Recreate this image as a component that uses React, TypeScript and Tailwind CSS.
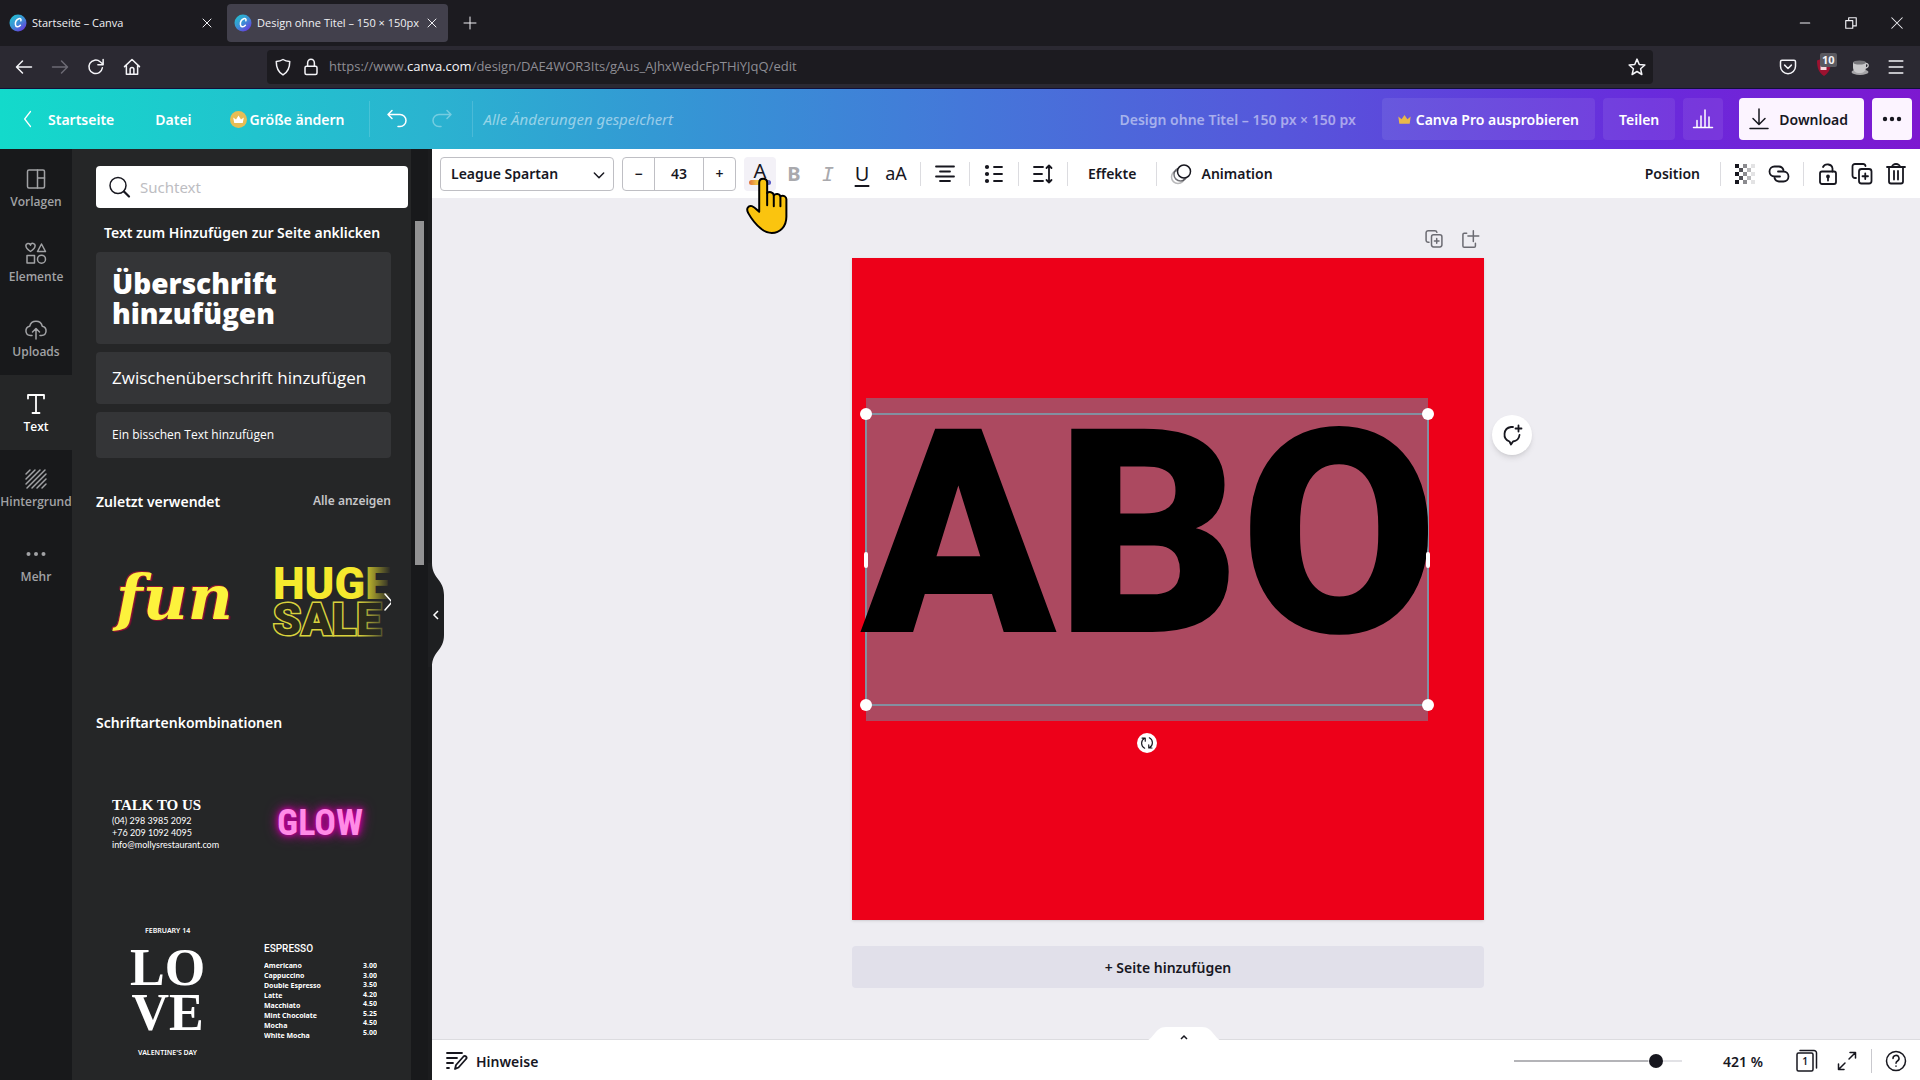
import { useState } from 'react';
import type { ReactNode } from 'react';

type IconProps = {
  size?: number;
  stroke?: number;
  className?: string;
  children: ReactNode;
};

function Icon({ size = 24, stroke = 1.5, className = '', children }: IconProps) {
  return (
    <svg
      width={size}
      height={size}
      viewBox="0 0 24 24"
      fill="none"
      stroke="currentColor"
      strokeWidth={stroke}
      strokeLinecap="round"
      strokeLinejoin="round"
      className={`shrink-0 ${className}`}
      aria-hidden="true"
    >
      {children}
    </svg>
  );
}

function CanvaLogo() {
  return (
    <svg width="18" height="18" viewBox="0 0 18 18" className="shrink-0" aria-hidden="true">
      <defs>
        <linearGradient id="logo" x1="0" y1="0" x2="0.8" y2="1">
          <stop offset="0" stopColor="#1fc8cf" />
          <stop offset="0.55" stopColor="#3d8fd6" />
          <stop offset="1" stopColor="#6a33dc" />
        </linearGradient>
      </defs>
      <circle cx="9" cy="9" r="8.5" fill="url(#logo)" />
      <path d="M11.8 6.8c.8-1.6-.4-2.7-2-2.1-2.3.9-3.6 3.4-3.4 5.8.2 2.6 2.9 3.3 5 .8" fill="none" stroke="#fff" strokeWidth="1.5" strokeLinecap="round" />
    </svg>
  );
}

const crownPath = 'M4 18h16l1.500-11-5 4L12 4.500 7.500 11l-5-4z';

function DuplicateIcon({ size = 24 }: { size?: number }) {
  return (
    <Icon size={size} stroke={1.8}>
      <path d="M6 16H5a2.500 2.500 0 0 1-2.500-2.500v-9A2.500 2.500 0 0 1 5 2h8a2.500 2.500 0 0 1 2.500 2" />
      <rect x="9" y="7" width="12.5" height="14.5" rx="2.5" />
      <path d="M15.250 11.500v5.500M12.500 14.250H18" />
    </Icon>
  );
}

function TabBar() {
  return (
    <div className="flex h-[46px] items-center bg-[#1c1b20] font-['Open_Sans',sans-serif] text-[11px] text-[#f0f0f4]">
      <a href="#start" className="flex w-[227px] items-center pr-[14px] pl-[9px]">
        <CanvaLogo />
        <span className="ml-[5px] flex-1">Startseite – Canva</span>
        <Icon size={12} stroke={2}><path d="M4 4l16 16M20 4L4 20" /></Icon>
      </a>
      <a href="#design" className="flex h-[38px] w-[221px] items-center rounded bg-[#42404c] pr-[10px] pl-[7px]">
        <CanvaLogo />
        <span className="ml-[5px] flex-1 whitespace-nowrap">Design ohne Titel – 150 × 150px</span>
        <Icon size={12} stroke={2}><path d="M4 4l16 16M20 4L4 20" /></Icon>
      </a>
      <button aria-label="Neuer Tab" className="ml-[14px]">
        <Icon size={16}><path d="M12 3v18M3 12h18" /></Icon>
      </button>
      <div className="ml-auto flex items-center gap-8 pr-4">
        <button aria-label="Minimieren"><Icon size={14} stroke={2}><path d="M4 12h16" /></Icon></button>
        <button aria-label="Verkleinern">
          <Icon size={14} stroke={2}><path d="M3 8h12v13H3zM8 8V3h13v14h-6" /></Icon>
        </button>
        <button aria-label="Schließen"><Icon size={14} stroke={1.8}><path d="M3 3l18 18M21 3L3 21" /></Icon></button>
      </div>
    </div>
  );
}

function AddressBar() {
  return (
    <div className="flex h-[43px] items-center border-b border-[#12103a] bg-[#2b2932] text-[#f4f4f8]">
      <div className="flex w-[267px] items-center gap-[18px] pl-[15px]">
        <button aria-label="Zurück"><Icon size={18} stroke={2}><path d="M22 12H3M10 4l-8 8 8 8" /></Icon></button>
        <button aria-label="Vor" className="text-[#6c6a74]"><Icon size={18} stroke={2}><path d="M2 12h19M14 4l8 8-8 8" /></Icon></button>
        <button aria-label="Neu laden">
          <Icon size={18} stroke={2}><path d="M20.500 13a9 9 0 1 1-3-8l3.500 3M21.500 2v7h-7" /></Icon>
        </button>
        <button aria-label="Startseite">
          <Icon size={18} stroke={2}><path d="M2 11.500L12 2l10 9.500M4.500 10v11.500h15V10M9.500 21v-6a2.500 2.500 0 0 1 5 0v6" /></Icon>
        </button>
      </div>
      <div className="flex h-[34px] flex-1 items-center rounded bg-[#1c1b20] px-[7px] font-['Open_Sans',sans-serif] text-[13px]">
        <Icon size={18} stroke={2}><path d="M12 2c3 2 6 2.500 9 2.500C21 13 18 19 12 22.500 6 19 3 13 3 4.500c3 0 6-.5 9-2.500z" /></Icon>
        <Icon size={18} stroke={2} className="ml-[10px]">
          <rect x="4" y="11" width="16" height="11" rx="2" />
          <path d="M7.500 11V6.500a4.500 5 0 0 1 9 0V11" />
        </Icon>
        <span className="ml-[9px] flex-1 text-[#8e8d94]">
          https://www.<span className="text-[#f4f4f8]">canva.com</span>/design/DAE4WOR3Its/gAus_AJhxWedcFpTHiYJqQ/edit
        </span>
        <button aria-label="Lesezeichen">
          <Icon size={18} stroke={2}><path d="M12 1.500l3 7.200 7.500.7-5.700 5 1.700 7.600L12 18l-6.500 4 1.700-7.600-5.700-5 7.500-.7z" /></Icon>
        </button>
      </div>
      <div className="flex w-[267px] items-center justify-end gap-[18px] pr-[15px]">
        <button aria-label="Pocket">
          <Icon size={18} stroke={2}><path d="M4 3h16a2 2 0 0 1 2 2v6a10 10 0 0 1-20 0V5a2 2 0 0 1 2-2zM7.500 9.500l4.500 4.500 4.500-4.500" /></Icon>
        </button>
        <button aria-label="Werbeblocker" className="relative">
          <svg width="18" height="18" viewBox="0 0 18 18" aria-hidden="true">
            <path d="M9 0l7 2.500C16 10 14 15 9 18 4 15 2 10 2 2.500z" fill="#9c1230" />
            <path d="M5.500 7h6v5h-6z" fill="#f7d9de" />
          </svg>
          <span className="absolute -top-[5px] left-[5px] rounded-xs bg-[#5a5960] px-[2px] text-[11px] leading-[14px] font-bold">10</span>
        </button>
        <button aria-label="Erweiterung">
          <svg width="18" height="18" viewBox="0 0 18 18" aria-hidden="true">
            <ellipse cx="9" cy="14" rx="8.5" ry="3" fill="#a5a4a8" />
            <path d="M2 4h13v5c0 4-2.500 6-6.500 6S2 13 2 9z" fill="#c9c8cb" />
            <ellipse cx="8.5" cy="4.5" rx="6.5" ry="2" fill="#77767b" />
            <path d="M15 5.500c3 0 3 4-.5 4.500" fill="none" stroke="#c9c8cb" strokeWidth="1.3" />
          </svg>
        </button>
        <button aria-label="Menü"><Icon size={18} stroke={2.2}><path d="M3 4h18M3 12h18M3 20h18" /></Icon></button>
      </div>
    </div>
  );
}

function Header() {
  return (
    <header className="flex h-[60px] items-center bg-[linear-gradient(90deg,#13dacb_0%,#2ab4d0_22%,#3399d4_34%,#4478d9_50%,#5558db_66%,#692bdc_86%,#7d18d0_100%)] text-[14px] font-semibold text-white">
      <a href="#home" className="flex items-center pl-[18px]">
        <Icon size={20}><path d="M15 3l-7 9 7 9" /></Icon>
        <span className="ml-[10px]">Startseite</span>
      </a>
      <button className="ml-[41px]">Datei</button>
      <button className="ml-[38px] flex items-center gap-[3px]">
        <svg width="17" height="17" viewBox="0 0 24 24" aria-hidden="true">
          <circle cx="12" cy="12" r="12" fill="#e6bd55" />
          <path d="M6 17h12l1.500-8-4 3L12 6.500 8.500 12l-4-3z" fill="#fff" />
        </svg>
        Größe ändern
      </button>
      <span className="ml-6 h-9 w-px bg-white/15" />
      <button aria-label="Rückgängig" className="ml-[15px]">
        <Icon><path d="M7 3.500L3 7.500l4 4M3 7.500h12a6 6 0 0 1 0 12h-2" /></Icon>
      </button>
      <button aria-label="Wiederholen" className="ml-[21px] text-white/35">
        <Icon><path d="M17 3.500l4 4-4 4M21 7.500H9a6 6 0 0 0 0 12h2" /></Icon>
      </button>
      <span className="ml-[18px] h-9 w-px bg-white/15" />
      <span className="ml-[11px] text-[15px] font-normal text-white/50 italic">Alle Änderungen gespeichert</span>
      <div className="ml-auto flex items-center gap-2 pr-2">
        <span className="mr-[18px] text-white/50">Design ohne Titel – 150 px × 150 px</span>
        <button className="flex h-[42px] items-center gap-[5px] rounded bg-white/8 px-4">
          <svg width="13" height="13" viewBox="2 4 20 15" aria-hidden="true"><path d={crownPath} fill="#eab94a" /></svg>
          Canva Pro ausprobieren
        </button>
        <button className="h-[42px] rounded bg-white/8 px-4">Teilen</button>
        <button aria-label="Statistik" className="flex h-[42px] w-10 items-center justify-center rounded bg-white/8">
          <Icon><path d="M2.500 20.500h19M6 20.500v-7M10 20.500V9M14 20.500V3M18 20.500V10" /></Icon>
        </button>
        <button className="ml-2 flex h-[42px] items-center gap-2 rounded bg-[#fcf4ff] pr-4 pl-2 text-[#17171f]">
          <Icon><path d="M12 2v15M6 11.500l6 6 6-6M3 21.500h18" /></Icon>
          Download
        </button>
        <button aria-label="Mehr" className="flex h-[42px] w-10 items-center justify-center rounded bg-[#fcf4ff] text-[#17171f]">
          <svg width="20" height="6" viewBox="0 0 20 6" fill="currentColor" aria-hidden="true">
            <circle cx="3" cy="3" r="2.2" /><circle cx="10" cy="3" r="2.2" /><circle cx="17" cy="3" r="2.2" />
          </svg>
        </button>
      </div>
    </header>
  );
}

const railItems = [
  {
    label: 'Vorlagen',
    icon: <Icon><rect x="3.5" y="3" width="17" height="18" rx="1.5" /><path d="M13.500 3v18M13.500 11h7" /></Icon>,
  },
  {
    label: 'Elemente',
    icon: (
      <Icon>
        <path d="M6.500 9.500C3 7 2 5.500 2 4.200A2.300 2.300 0 0 1 6.500 3.200a2.300 2.300 0 0 1 4.500 1c0 1.300-1 2.800-4.500 5.300zM17.500 2l4 7.500h-8zM3 13.500h7.500V21H3z" />
        <circle cx="17.5" cy="17.2" r="4" />
      </Icon>
    ),
  },
  {
    label: 'Uploads',
    icon: <Icon><path d="M8 18.500H6.500a4.700 4.700 0 0 1-.8-9.300 6.500 6.500 0 0 1 12.600 0 4.700 4.700 0 0 1-.8 9.300H16M12 22V12M8.500 15L12 11.500l3.500 3.500" /></Icon>,
  },
  {
    label: 'Text',
    icon: <Icon stroke={1.8}><path d="M4 6.500V3h16v3.500M12 3v18M8.500 21h7" /></Icon>,
  },
  {
    label: 'Hintergrund',
    icon: <Icon><path d="M2 7l4-4M2 12l9-9M2 17L16 3M3 21L21 3M8 21L22 7M13 21l9-9M18 21l4-4" /></Icon>,
  },
  {
    label: 'Mehr',
    icon: <Icon><g fill="currentColor" stroke="none"><circle cx="4.5" cy="12" r="2" /><circle cx="12" cy="12" r="2" /><circle cx="19.5" cy="12" r="2" /></g></Icon>,
  },
];

function Rail({ active, onSelect }: { active: string; onSelect: (label: string) => void }) {
  return (
    <nav className="flex w-[72px] shrink-0 flex-col bg-[#18191b] pt-px">
      {railItems.map((item) => (
        <button
          key={item.label}
          onClick={() => onSelect(item.label)}
          className={`flex h-[75px] flex-col items-center pt-[17px] font-['Open_Sans',sans-serif] text-[12px] leading-[22px] font-semibold ${
            item.label === active ? 'bg-[#252627] text-white' : 'text-[#a1a2a5]'
          }`}
        >
          {item.icon}
          {item.label}
        </button>
      ))}
    </nav>
  );
}

const drinks = ['Americano', 'Cappuccino', 'Double Espresso', 'Latte', 'Macchiato', 'Mint Chocolate', 'Mocha', 'White Mocha'];
const prices = ['3.00', '3.00', '3.50', '4.20', '4.50', '5.25', '4.50', '5.00'];

function TextPanel() {
  return (
    <aside className="relative flex w-[360px] shrink-0 border-r-4 border-[#1b1c1e] bg-[#252627] text-white">
      <div className="min-w-0 flex-1 overflow-hidden pt-[17px] pl-6">
        <label className="flex h-[42px] w-[312px] items-center gap-[9px] rounded bg-white pl-[11px] text-[#17171f]">
          <Icon><circle cx="11" cy="10.5" r="8" /><path d="M17 16.500l5 5" strokeWidth="2.2" /></Icon>
          <input aria-label="Suche" placeholder="Suchtext" className="min-w-0 flex-1 text-[15px] outline-none placeholder:text-[#bdbdc2]" />
        </label>
        <div className="w-[295px]">
          <p className="mt-[13px] pl-2 text-[14px] leading-6 font-semibold">Text zum Hinzufügen zur Seite anklicken</p>
          <div className="mt-[7px] flex flex-col gap-2 font-['Open_Sans',sans-serif]">
            <button className="h-[92px] rounded bg-[#343537] px-4 text-left text-[28px] leading-[30px] font-extrabold">
              Überschrift<br />hinzufügen
            </button>
            <button className="h-[52px] rounded bg-[#343537] px-4 text-left text-[17px] whitespace-nowrap">Zwischenüberschrift hinzufügen</button>
            <button className="h-[46px] rounded bg-[#343537] px-4 text-left text-[12px]">Ein bisschen Text hinzufügen</button>
          </div>

          <div className="mt-[31px] flex h-6 items-center justify-between">
            <h2 className="text-[14px] font-semibold">Zuletzt verwendet</h2>
            <a href="#alle" className="text-[12px] font-semibold text-[#c5c5c8]">Alle anzeigen</a>
          </div>
          <div className="relative mt-[35px] flex h-[108px] items-center justify-between overflow-hidden">
            <span className="pb-2 pl-5 font-['DejaVu_Serif',serif] text-[62px] leading-[64px] font-bold text-[#fdf23c] italic [text-shadow:1px_1px_0_#8c1832,-1px_-1px_0_#8c1832,2px_1px_0_#5c1230]">fun</span>
            <span className="w-[118px] shrink-0 font-['Roboto',sans-serif] text-[45px] leading-[36px] font-black text-[#f5e92d]">
              <span className="block">HUGE</span>
              <span className="block text-[#2b2a1a] [paint-order:stroke_fill] [-webkit-text-stroke:3px_#d9d23c]">SALE</span>
            </span>
            <span className="absolute inset-y-0 right-0 w-8 bg-linear-to-r from-transparent to-[#252627]" />
            <button aria-label="Weiter" className="absolute -right-[9px]"><Icon><path d="M9 4l7 8-7 8" /></Icon></button>
          </div>

          <h2 className="mt-[55px] text-[14px] leading-6 font-semibold">Schriftartenkombinationen</h2>
          <div className="mt-[46px] flex h-[84px] items-center justify-between pr-7 pl-4">
            <div className="font-['Lato',sans-serif] text-[9px] leading-3">
              <p className="font-['Liberation_Serif',serif] text-[15px] leading-5 font-bold">TALK TO US</p>
              <p>(04) 298 3985 2092</p>
              <p>+76 209 1092 4095</p>
              <p>info@mollysrestaurant.com</p>
            </div>
            <span className="font-['Liberation_Sans_Narrow','Roboto_Condensed','Roboto',sans-serif] text-[36px] font-bold text-[#ff8be6] [text-shadow:0_0_4px_#c0009b,0_0_8px_#c0009b,0_0_14px_#a8008a]">GLOW</span>
          </div>
          <div className="mt-[60px] flex justify-between pr-[14px] pl-[34px]">
            <div className="flex flex-col items-center text-[7px] leading-3 font-semibold">
              <p>FEBRUARY 14</p>
              <p className="mt-2 text-center font-['Liberation_Serif',serif] text-[52px] leading-[45px] font-bold">LO<br />VE</p>
              <p className="mt-3">VALENTINE'S DAY</p>
            </div>
            <div className="w-[113px] pt-4 text-[7px] font-bold">
              <p className="font-['Roboto',sans-serif] text-[10px] leading-4 font-medium">ESPRESSO</p>
              <div className="mt-1 flex h-[77px] justify-between overflow-hidden">
                <div className="leading-[10px]">{drinks.map((name) => <p key={name}>{name}</p>)}</div>
                <div className="flex h-[76px] flex-col justify-between text-right leading-[9px]">
                  {prices.map((price, i) => <p key={i}>{price}</p>)}
                </div>
              </div>
            </div>
          </div>
        </div>
      </div>
      <div className="w-[17px] shrink-0 bg-[#18191b] pt-[72px]">
        <div className="mx-1 h-[344px] bg-[#929293]" />
      </div>
      <button aria-label="Leiste einklappen" className="absolute top-[414px] -right-4 z-10 text-white">
        <svg width="16" height="104" viewBox="0 0 16 104" aria-hidden="true">
          <path d="M0 0h4c0 16 12 16 12 32v40c0 16-12 16-12 32H0z" fill="#1e1f21" />
          <path d="M10 48l-4 4 4 4" fill="none" stroke="currentColor" strokeWidth="1.5" />
        </svg>
      </button>
    </aside>
  );
}

function Divider() {
  return <span className="h-6 w-px bg-[#dcdce0]" />;
}

function Toolbar() {
  const [size, setSize] = useState(43);

  return (
    <div className="relative z-10 flex h-[49px] shrink-0 items-center bg-white px-2 text-[14px] font-semibold text-[#17171f]">
      <div className="relative">
        <select aria-label="Schriftart" className="h-[34px] w-[174px] appearance-none rounded border border-[#bfbfc4] pl-[10px]">
          <option>League Spartan</option>
        </select>
        <Icon size={16} stroke={2.2} className="pointer-events-none absolute top-[10px] right-[7px]"><path d="M5 9l7 7 7-7" /></Icon>
      </div>
      <div className="ml-2 flex h-[34px] rounded border border-[#bfbfc4]">
        <button aria-label="Kleiner" onClick={() => setSize(size - 1)} className="w-[31px]">−</button>
        <input
          aria-label="Schriftgröße"
          value={size}
          onChange={(e) => setSize(Number(e.target.value) || 0)}
          className="w-[50px] border-x border-[#bfbfc4] text-center outline-none"
        />
        <button aria-label="Größer" onClick={() => setSize(size + 1)} className="w-[31px]">+</button>
      </div>
      <button aria-label="Textfarbe" className="relative ml-2 flex h-[34px] w-8 flex-col items-center rounded bg-[#f3f1f7] pt-[5px]">
        <span className="text-[20px] leading-[18px] font-normal">A</span>
        <span className="h-[5px] w-[22px] rounded-full bg-linear-to-r from-[#e0703c] via-[#f5e04a] to-[#4b49c8]" />
        <svg width="47" height="58" viewBox="940 95 140 175" className="pointer-events-none absolute top-5 -left-px" aria-hidden="true">
          <path
            d="M988 200V112C988 96 1012 96 1012 112V143C1018 138 1030 140 1032 150C1038 143 1050 146 1052 153C1062 148 1070 155 1070 162V215C1070 245 1050 264 1026 264C1010 264 1000 257 992 250C978 238 965 222 955 204C947 190 956 180 966 183C975 186 980 193 988 200Z"
            fill="#fac40f"
            stroke="#000"
            strokeWidth="6"
            strokeLinejoin="round"
          />
          <path d="M1012 143V180M1032 150V183M1052 153V183" stroke="#000" strokeWidth="6" strokeLinecap="round" />
        </svg>
      </button>
      <div className="ml-[6px] flex h-6 items-center gap-[10px]">
        <button aria-label="Fett" className="w-6 text-[20px] font-bold text-[#a9a9ad]">B</button>
        <button aria-label="Kursiv" className="w-6 font-['DejaVu_Sans_Mono',monospace] text-[20px] font-normal text-[#a9a9ad] italic">I</button>
        <button aria-label="Unterstrichen" className="w-6 text-[20px] font-normal underline underline-offset-4">U</button>
        <button aria-label="Großbuchstaben" className="w-6 text-[18px] font-normal">aA</button>
      </div>
      <div className="ml-3 flex items-center gap-3">
        <Divider />
        <button aria-label="Ausrichtung"><Icon stroke={1.8}><path d="M3 4.500h18M7 9.500h10M3 14.500h18M7 19h10" /></Icon></button>
        <Divider />
        <button aria-label="Liste">
          <Icon stroke={1.8}>
            <path d="M12 5h8M12 12h8M12 19h8" />
            <g fill="currentColor"><circle cx="5" cy="5" r="1.2" /><circle cx="5" cy="12" r="1.2" /><circle cx="5" cy="19" r="1.2" /></g>
          </Icon>
        </button>
        <Divider />
        <button aria-label="Abstand"><Icon stroke={1.8}><path d="M3 5h9M3 12h8M3 19h9M18 3.500v17M15.500 6L18 3.500 20.500 6M15.500 18l2.500 2.500 2.500-2.500" /></Icon></button>
        <Divider />
      </div>
      <button className="mx-5">Effekte</button>
      <Divider />
      <button className="ml-3 flex items-center gap-2">
        <Icon>
          <circle cx="9" cy="15" r="6.5" opacity="0.3" />
          <circle cx="11.5" cy="12.5" r="6.5" opacity="0.6" />
          <circle cx="15" cy="9.5" r="6.5" fill="#fff" />
        </Icon>
        Animation
      </button>
      <button className="mr-5 ml-auto">Position</button>
      <Divider />
      <div className="mx-3 flex gap-[10px]">
        <button aria-label="Transparenz">
          <svg width="24" height="24" viewBox="0 0 24 24" fill="#17171f" aria-hidden="true">
            <path d="M2 2h4v4H2zM2 10h4v4H2zM2 18h4v4H2z" />
            <path d="M6 6h4v4H6zM6 14h4v4H6z" opacity="0.75" />
            <path d="M10 2h4v4h-4zM10 10h4v4h-4zM10 18h4v4h-4z" opacity="0.5" />
            <path d="M14 6h4v4h-4zM14 14h4v4h-4z" opacity="0.3" />
            <path d="M18 2h4v4h-4zM18 10h4v4h-4zM18 18h4v4h-4z" opacity="0.12" />
          </svg>
        </button>
        <button aria-label="Link">
          <Icon stroke={1.8}>
            <path d="M13 14.500H7.500a5 5 0 0 1 0-10H12a5 5 0 0 1 4.500 3.500M11 9.500h5.500a5 5 0 0 1 0 10H12A5 5 0 0 1 7.500 16" />
          </Icon>
        </button>
      </div>
      <Divider />
      <div className="mr-1 ml-3 flex gap-[10px]">
        <button aria-label="Sperren">
          <Icon stroke={1.8}><rect x="4" y="9.5" width="16" height="12.5" rx="2" /><path d="M7 5a5 4.500 0 0 1 9.500 1.500v3M12 15v3.500" /><circle cx="12" cy="14.5" r="1" /></Icon>
        </button>
        <button aria-label="Duplizieren"><DuplicateIcon /></button>
        <button aria-label="Löschen">
          <Icon stroke={1.8}><path d="M3 5h18M8 5a4 3 0 0 1 8 0M5 5v14.500a2 2 0 0 0 2 2h10a2 2 0 0 0 2-2V5M10 9v8.500M14 9v8.500" /></Icon>
        </button>
      </div>
    </div>
  );
}

const corners = ['-top-[7px] -left-[7px]', '-top-[7px] -right-[7px]', '-bottom-[7px] -left-[7px]', '-bottom-[7px] -right-[7px]'];

function Workspace() {
  return (
    <div className="flex flex-1 flex-col items-center overflow-hidden pt-7 pr-4">
      <div className="w-[632px]">
        <div className="flex h-8 items-start justify-end gap-4 pt-[3px] pr-1 text-[#6b6b72]">
          <button aria-label="Seite duplizieren"><DuplicateIcon size={20} /></button>
          <button aria-label="Neue Seite">
            <Icon size={20} stroke={1.8}><path d="M8 5H5a1.500 1.500 0 0 0-1.500 1.500v14A1.500 1.500 0 0 0 5 22h12a1.500 1.500 0 0 0 1.500-1.500V17M16 2v13M9.500 8.500h13" /></Icon>
          </button>
        </div>
        <div className="relative h-[662px] bg-[#ed0019] shadow-sm">
          <div className="absolute top-[140px] left-[14px] h-[323px] w-[562px] bg-[#ac4960]">
            <div className="absolute -inset-x-px top-[15px] bottom-[15px] border-2 border-[#848fa0]">
              <p className="-ml-[6px] font-['Roboto',sans-serif] text-[286px] leading-[240px] font-black whitespace-nowrap text-black">ABO</p>
              {corners.map((corner) => (
                <span key={corner} className={`absolute size-3 rounded-full bg-white ${corner}`} />
              ))}
              <span className="absolute top-1/2 -left-[3px] h-4 w-1 -translate-y-1/2 rounded-xs bg-white" />
              <span className="absolute top-1/2 -right-[3px] h-4 w-1 -translate-y-1/2 rounded-xs bg-white" />
            </div>
            <button aria-label="Drehen" className="absolute top-[335px] left-1/2 flex size-5 -translate-x-1/2 items-center justify-center rounded-full bg-white text-[#17171f]">
              <Icon size={14} stroke={2}><path d="M8 21a9.500 9.500 0 0 1 0-17M3.500 3.500H9V9M16 3a9.500 9.500 0 0 1 0 17M20.500 20.500H15V15" /></Icon>
            </button>
          </div>
          <button aria-label="Kommentar" className="absolute top-[157px] -right-12 flex size-10 items-center justify-center rounded-full bg-white text-[#17171f] shadow-md">
            <Icon stroke={1.8}><path d="M13 4h-2a7.500 7.500 0 0 0-1.500 14.500L11 21.500l2-3A7.500 7.500 0 0 0 19.500 12M18.500 2.500v6M15.500 5.500h6" /></Icon>
          </button>
        </div>
        <button className="mt-[26px] h-[42px] w-full rounded bg-[#e1e0ea] text-[14px] font-semibold text-[#17171f]">+ Seite hinzufügen</button>
      </div>
    </div>
  );
}

function Footer() {
  const [zoom, setZoom] = useState(421);

  return (
    <footer className="relative flex h-[41px] shrink-0 items-center border-t border-[#dcdce0] bg-white px-3 pt-[2px] text-[14px] font-semibold text-[#17171f]">
      <button className="flex items-center gap-2">
        <Icon stroke={1.8}><path d="M3 4h15M3 9h10M3 14h6M3 19h2M11 20l1-4 7.500-8.500a1.700 1.700 0 0 1 2.500 2.500L14.500 18.500z" /></Icon>
        Hinweise
      </button>
      <button aria-label="Seiten anzeigen" className="absolute -top-[13px] left-[calc(50%+8px)] -translate-x-1/2">
        <svg width="80" height="14" viewBox="0 0 80 14" aria-hidden="true">
          <path d="M0 14C10 14 10 0 22 0h36c12 0 12 14 22 14z" fill="#fff" />
          <path d="M37 12l3-3 3 3" fill="none" stroke="#17171f" strokeWidth="1.5" />
        </svg>
      </button>
      <input
        type="range"
        aria-label="Zoom"
        min={10}
        max={480}
        value={zoom}
        onChange={(e) => setZoom(Number(e.target.value))}
        className="ml-auto h-[2px] w-[168px] appearance-none bg-linear-to-r from-[#b4b4b8] from-80% to-[#e2e2e6] to-80% [&::-webkit-slider-thumb]:size-[14px] [&::-webkit-slider-thumb]:appearance-none [&::-webkit-slider-thumb]:rounded-full [&::-webkit-slider-thumb]:bg-[#17171f]"
      />
      <span className="ml-[41px]">{zoom} %</span>
      <button aria-label="Seitenübersicht" className="relative ml-8 flex size-6 items-center justify-center">
        <Icon className="absolute"><rect x="2" y="4" width="16" height="18" rx="1.5" /><path d="M5 1.500h14A2.500 2.500 0 0 1 21.500 4v15" /></Icon>
        <span className="pr-1 text-[10px]">1</span>
      </button>
      <button aria-label="Vollbild" className="ml-4">
        <Icon><path d="M14 10l6.500-6.500M15 3.500h5.500V9M10 14l-6.500 6.500M9 20.500H3.500V15" /></Icon>
      </button>
      <span className="mx-3 h-6 w-px bg-[#c9c9ce]" />
      <button aria-label="Hilfe">
        <Icon><circle cx="12" cy="12" r="9.5" /><path d="M9 9.500a3 3 0 1 1 4.500 2.500c-1 .6-1.500 1-1.500 2.200M12 17v.3" /></Icon>
      </button>
    </footer>
  );
}

export default function App() {
  const [active, setActive] = useState('Text');

  return (
    <div className="flex h-screen flex-col overflow-hidden bg-[#eeedf2] font-['Noto_Sans',sans-serif]">
      <TabBar />
      <AddressBar />
      <Header />
      <div className="flex min-h-0 flex-1">
        <Rail active={active} onSelect={setActive} />
        <TextPanel />
        <main className="flex min-w-0 flex-1 flex-col">
          <Toolbar />
          <Workspace />
          <Footer />
        </main>
      </div>
    </div>
  );
}
